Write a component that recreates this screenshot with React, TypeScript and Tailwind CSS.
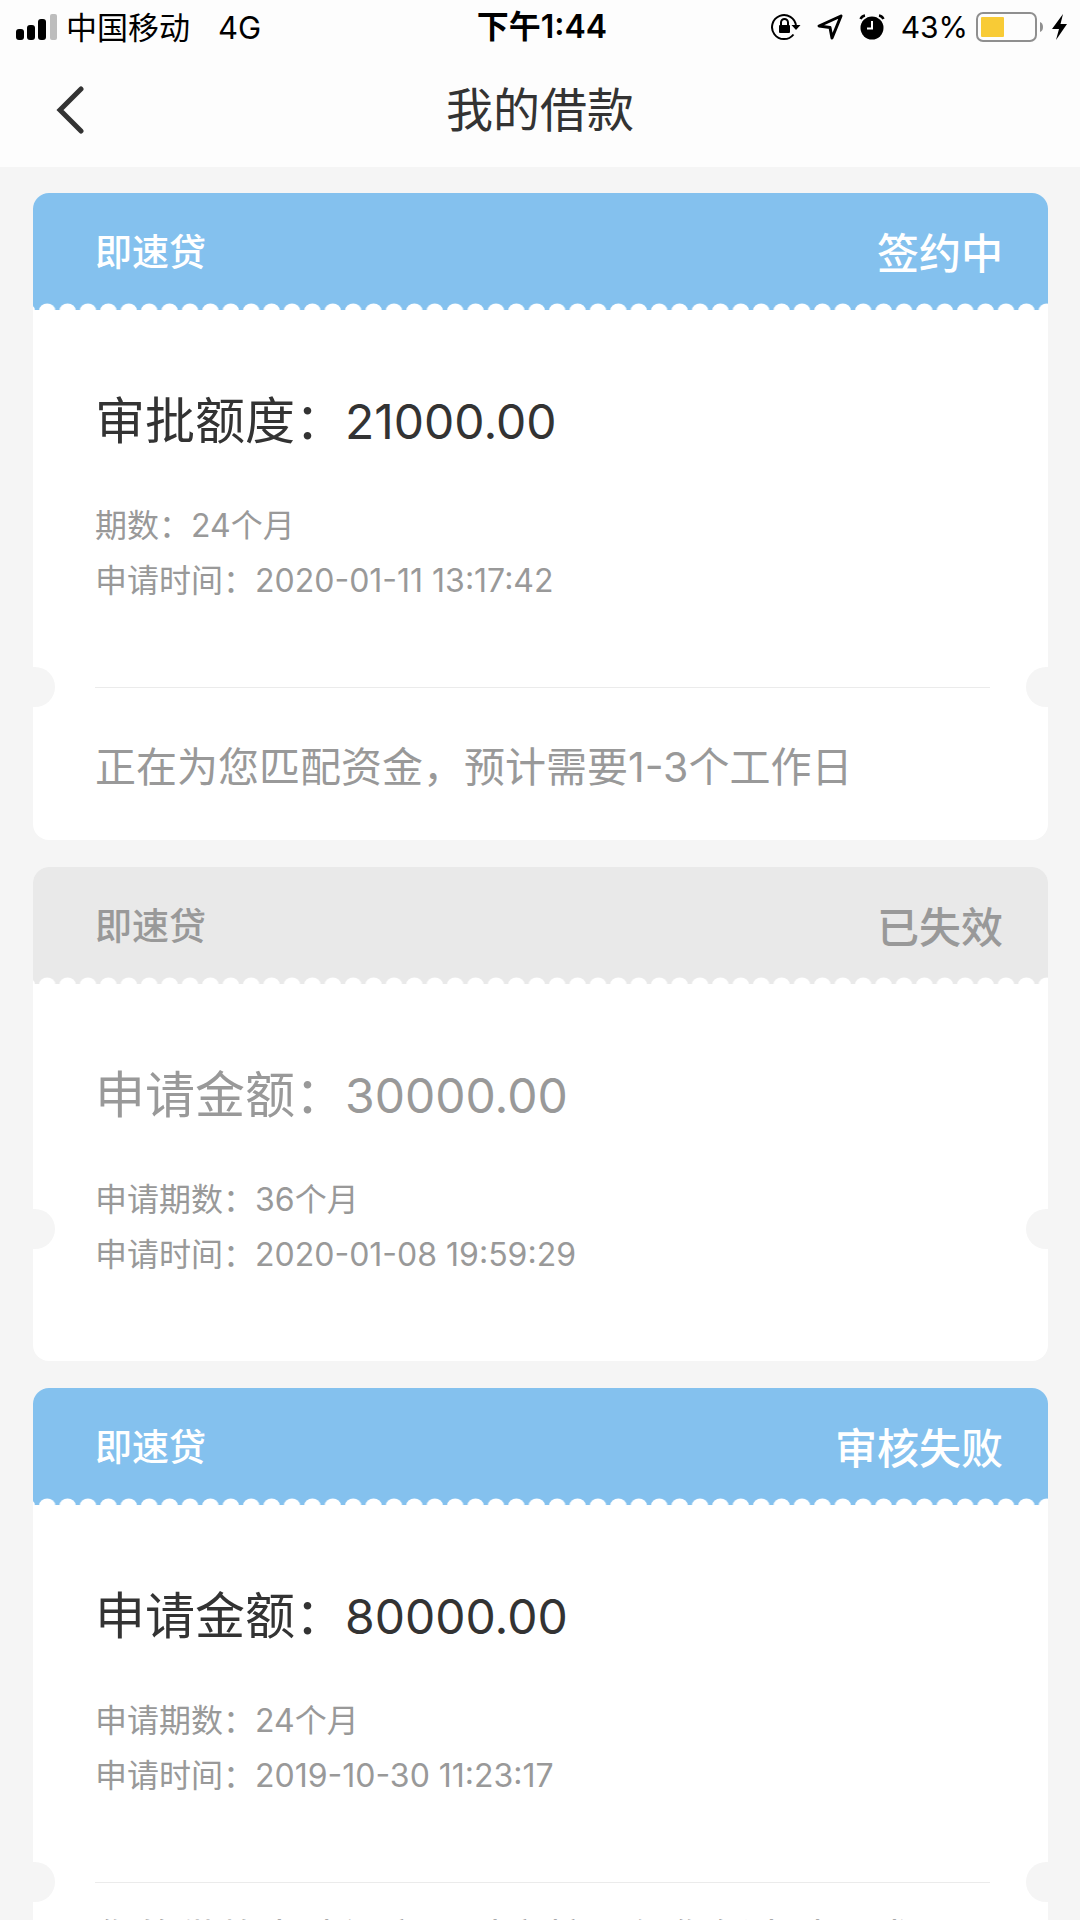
import { useId } from 'react';
import clsx from 'clsx';

type Loan = {
  product: string;
  status: string;
  active: boolean;
  amountLabel: string;
  amount: string;
  termLabel: string;
  term: string;
  appliedAt: string;
  note?: string;
};

const loans: Loan[] = [
  {
    product: '即速贷',
    status: '签约中',
    active: true,
    amountLabel: '审批额度：',
    amount: '21000.00',
    termLabel: '期数：',
    term: '24个月',
    appliedAt: '2020-01-11 13:17:42',
    note: '正在为您匹配资金，预计需要1-3个工作日',
  },
  {
    product: '即速贷',
    status: '已失效',
    active: false,
    amountLabel: '申请金额：',
    amount: '30000.00',
    termLabel: '申请期数：',
    term: '36个月',
    appliedAt: '2020-01-08 19:59:29',
  },
  {
    product: '即速贷',
    status: '审核失败',
    active: true,
    amountLabel: '申请金额：',
    amount: '80000.00',
    termLabel: '申请期数：',
    term: '24个月',
    appliedAt: '2019-10-30 11:23:17',
    note: '您的借款申请初审通过审核，但您暂未达要求，感谢您的关注',
  },
];

function SignalIcon() {
  return (
    <svg width="42" height="27" viewBox="0 0 42 27" aria-hidden="true">
      <rect x="0" y="15" width="8" height="11" rx="3" />
      <rect x="11" y="11" width="8" height="15" rx="3" />
      <rect x="22" y="5" width="8" height="21" rx="3" />
      <rect x="34" y="0" width="7" height="26" rx="2" fill="#bdbdbd" />
    </svg>
  );
}

function RotationLockIcon() {
  return (
    <svg width="30" height="28" viewBox="0 0 30 28" fill="none" aria-hidden="true">
      <path d="M22.5 21.5A12 12 0 1 1 25 13" stroke="#000" strokeWidth="2" />
      <path d="M20.5 12H29.5L25 17Z" fill="#000" />
      <rect x="8" y="12" width="11" height="8" rx="1" fill="#000" />
      <path d="M10 13V9.500a3.500 3.500 0 0 1 7 0V13" stroke="#000" strokeWidth="2" />
    </svg>
  );
}

function LocationIcon() {
  return (
    <svg width="26" height="26" viewBox="0 0 26 26" fill="none" aria-hidden="true">
      <path d="M24 2L2 12L13 13.500L15 24Z" stroke="#000" strokeWidth="3" strokeLinejoin="round" />
    </svg>
  );
}

function AlarmIcon() {
  return (
    <svg width="26" height="26" viewBox="0 0 26 26" fill="none" aria-hidden="true">
      <circle cx="13" cy="14" r="11.500" fill="#000" />
      <path d="M13 7V14.500H8" stroke="#fff" strokeWidth="2" />
      <path d="M1.500 5Q3 2 6 1.500M20 1.500Q23 2 24.500 5" stroke="#000" strokeWidth="2.500" />
    </svg>
  );
}

function BatteryIcon() {
  return (
    <svg width="68" height="30" viewBox="0 0 68 30" fill="none" aria-hidden="true">
      <rect x="1" y="1" width="59" height="28" rx="6" stroke="#8f8f8f" strokeWidth="2" />
      <rect x="5" y="5" width="23" height="20" rx="1" fill="#f8cb36" />
      <path d="M64 10Q67 11 67 15T64 20Z" fill="#8f8f8f" />
    </svg>
  );
}

function BoltIcon() {
  return (
    <svg width="16" height="28" viewBox="0 0 16 28" aria-hidden="true">
      <path d="M11 1L0 16H7L4 27L15 11H8.500Z" />
    </svg>
  );
}

function StatusBar() {
  return (
    <div className="grid h-14 grid-cols-[1fr_auto_1fr] items-center pr-3 pb-0.5 pl-4 text-[31px] leading-none text-black">
      <div className="flex items-center">
        <SignalIcon />
        <span className="ml-2">中国移动</span>
        <span className="ml-7">4G</span>
      </div>
      <span className="text-[32px] font-semibold">下午1:44</span>
      <div className="flex items-center justify-end">
        <RotationLockIcon />
        <span className="ml-4">
          <LocationIcon />
        </span>
        <span className="ml-4">
          <AlarmIcon />
        </span>
        <span className="mr-2 ml-4 text-[30px]">43%</span>
        <BatteryIcon />
        <span className="ml-2">
          <BoltIcon />
        </span>
      </div>
    </div>
  );
}

/* Row of half-round teeth cut into the bottom edge of a card header. */
function Scallops() {
  const id = useId();
  return (
    <svg className="block h-[7px] w-full" aria-hidden="true">
      <defs>
        <pattern id={id} x="4" width="20.4" height="7" patternUnits="userSpaceOnUse">
          <ellipse cx="10.200" cy="7" rx="8" ry="6.500" fill="#fff" />
        </pattern>
      </defs>
      <rect width="100%" height="7" fill={`url(#${id})`} />
    </svg>
  );
}

function Notches({ className }: { className: string }) {
  return (
    <div className={clsx('absolute inset-x-0 flex h-10 justify-between', className)}>
      <span className="w-[22px] rounded-r-full bg-[#f5f5f5]" />
      <span className="w-[22px] rounded-l-full bg-[#f5f5f5]" />
    </div>
  );
}

function LoanCard({ loan }: { loan: Loan }) {
  return (
    <article className="relative overflow-hidden rounded-2xl bg-white">
      <header
        className={clsx(
          loan.active ? 'bg-[#84c1ee] text-white' : 'bg-[#e9e9e9] text-[#999999]',
        )}
      >
        <div className="flex h-[110px] items-center justify-between pt-2.5 pr-[45px] pl-[62px] font-medium">
          <h2 className="text-[37px] font-medium">{loan.product}</h2>
          <span className="text-[42px]">{loan.status}</span>
        </div>
        <Scallops />
      </header>

      <div className="px-[62px] pt-[76px] pb-[79px]">
        <p
          className={clsx(
            'h-[70px] text-[50px] leading-[70px]',
            loan.active ? 'text-[#333333]' : 'text-[#999999]',
          )}
        >
          {loan.amountLabel}
          <span className="text-[48px]">{loan.amount}</span>
        </p>
        <div className="mt-[42px] text-[32px] leading-[55px] text-[#999999]">
          <p>
            {loan.termLabel}
            {loan.term}
          </p>
          <p>申请时间：{loan.appliedAt}</p>
        </div>
      </div>

      {loan.note && (
        <div className="mr-[58px] ml-[62px] flex h-[153px] items-center border-t border-[#ebebeb] pt-1.5">
          <p className="text-[41px] leading-[46px] text-[#999999]">{loan.note}</p>
        </div>
      )}
      <Notches className={loan.note ? 'top-[474px]' : 'top-[342px]'} />
    </article>
  );
}

export default function App() {
  return (
    <div className="min-h-screen bg-[#f5f5f5] font-['Inter','Noto_Sans_CJK_SC',sans-serif]">
      <div className="bg-[#fdfdfd]">
        <StatusBar />
        <nav className="grid h-[111px] grid-cols-[1fr_auto_1fr] items-center pb-1">
          <button type="button" aria-label="返回" className="ml-14 w-8">
            <svg width="28" height="48" viewBox="0 0 28 48" fill="none" aria-hidden="true">
              <path d="M25 3L4 24L25 45" stroke="#333" strokeWidth="5" strokeLinecap="round" />
            </svg>
          </button>
          <h1 className="text-[47px] leading-[64px] text-[#333333]">我的借款</h1>
        </nav>
      </div>
      <main className="flex flex-col gap-[27px] pt-[26px] pr-8 pb-8 pl-[33px]">
        {loans.map((loan) => (
          <LoanCard key={loan.appliedAt} loan={loan} />
        ))}
      </main>
    </div>
  );
}
